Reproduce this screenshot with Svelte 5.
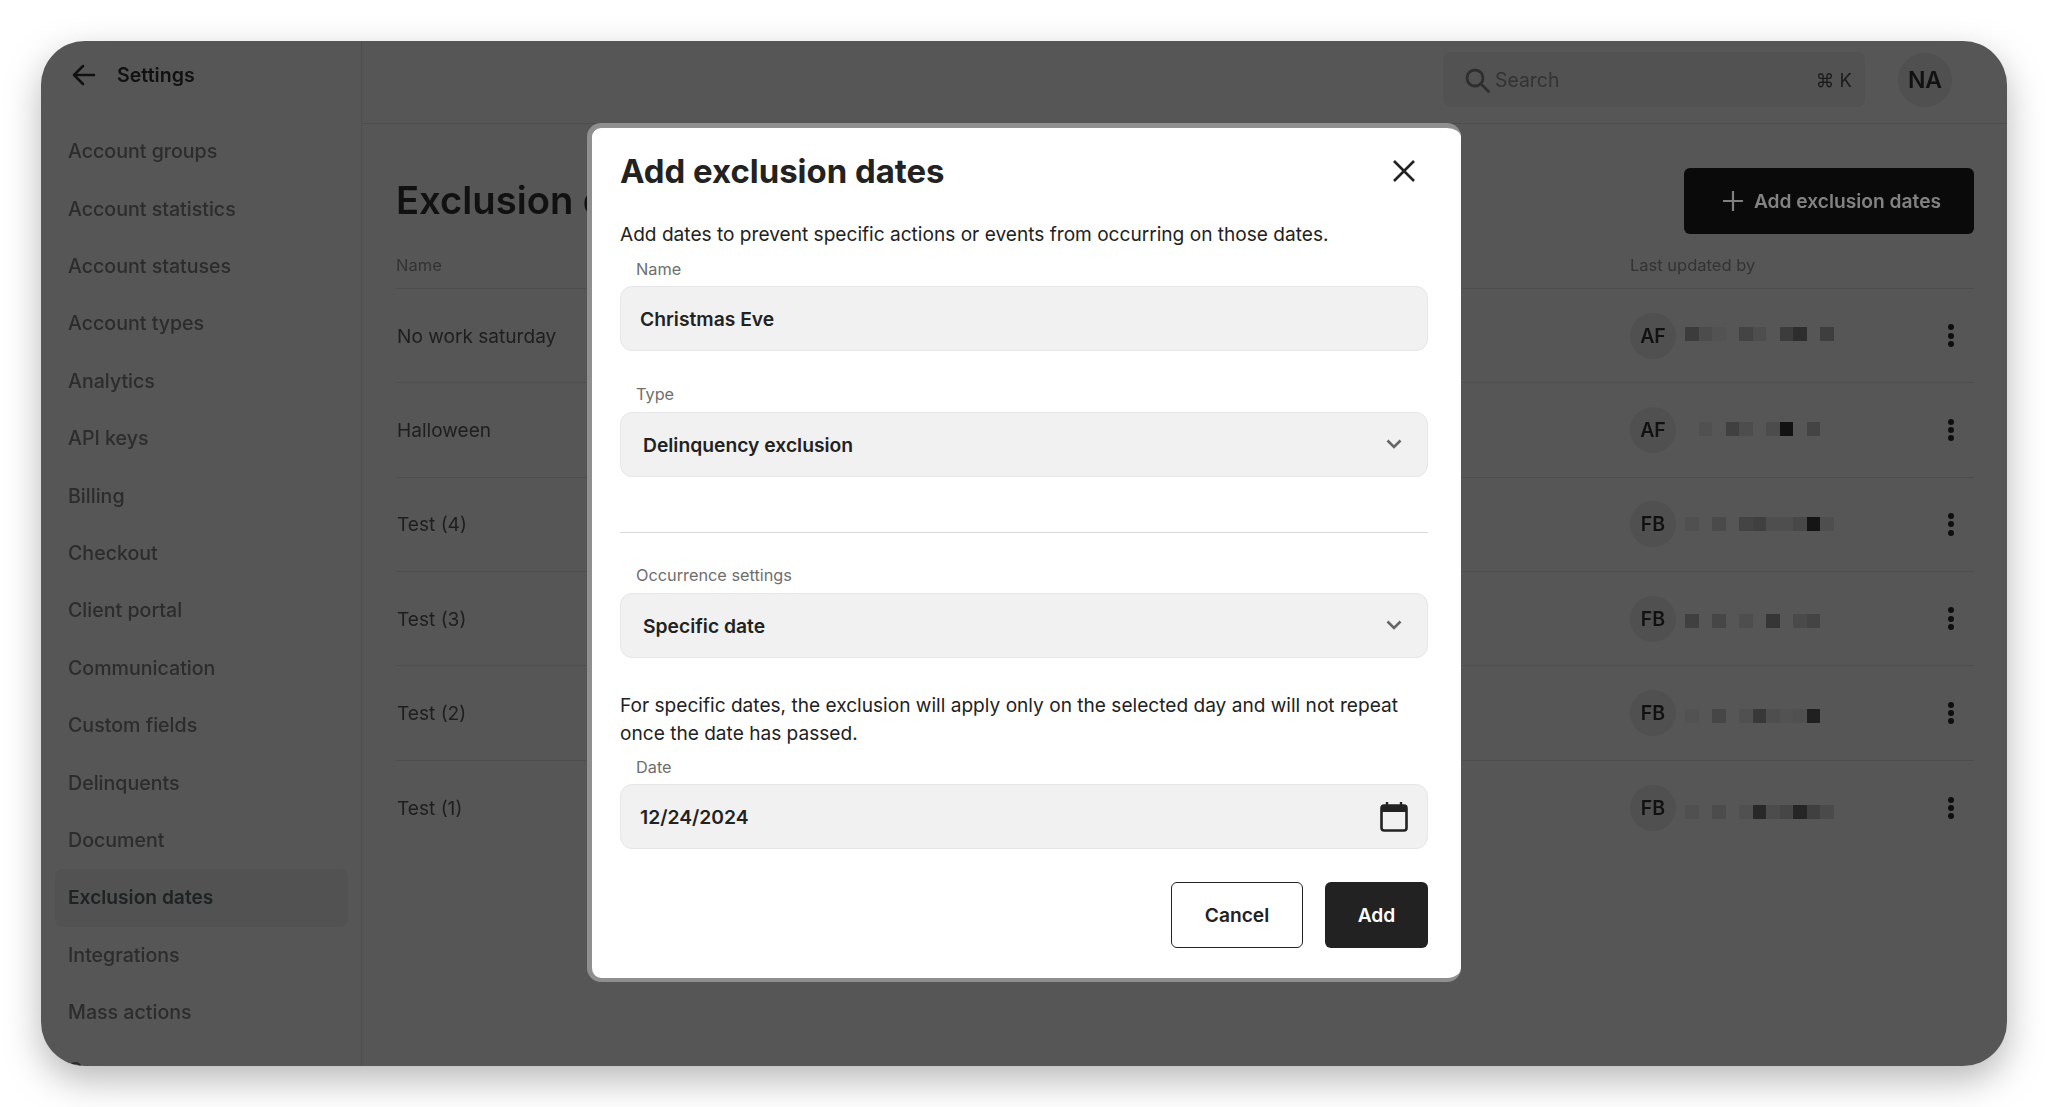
<script>
  const navItems = ['Account groups','Account statistics','Account statuses','Account types','Analytics','API keys','Billing','Checkout','Client portal','Communication','Custom fields','Delinquents','Document','Exclusion dates','Integrations','Mass actions','Occurrences'];
  const rows = [
    { name:'No work saturday', who:'AF', dy:-2, cells:[0x3c,0x4c,0x52,0,0x44,0x4e,0,0x3c,0x2e,0,0x3e] },
    { name:'Halloween', who:'AF', dy:-1, cells:[0,0x50,0,0x40,0x4d,0,0x4c,0x12,0,0x44,0] },
    { name:'Test (4)', who:'FB', dy:0, cells:[0x50,0,0x4a,0,0x44,0x40,0x4e,0x4e,0x48,0x15,0x4e] },
    { name:'Test (3)', who:'FB', dy:2, cells:[0x40,0,0x46,0,0x4e,0,0x36,0,0x4a,0x44,0] },
    { name:'Test (2)', who:'FB', dy:3, cells:[0x52,0,0x46,0,0x50,0x38,0x4e,0x52,0x50,0x20,0] },
    { name:'Test (1)', who:'FB', dy:4, cells:[0x50,0,0x4c,0,0x50,0x28,0x4c,0x46,0x26,0x40,0x4a] }
  ];
  const gray = (v) => v ? `rgb(${v},${v},${v})` : 'transparent';
</script>

<div class="page">
  <div class="window">
    <aside class="sidebar">
      <div class="back">
        <svg width="26" height="26" viewBox="0 0 26 26" fill="none" stroke="#111" stroke-width="2.5" stroke-linecap="round" stroke-linejoin="round"><path d="M23 13H3.5M12 4l-9 9 9 9"/></svg>
        <span>Settings</span>
      </div>
      <nav>
        {#each navItems as item}
          <div class="nav-item" class:active={item === 'Exclusion dates'}>{item}</div>
        {/each}
      </nav>
    </aside>

    <main class="main">
      <header class="topbar">
        <div class="search">
          <svg width="28" height="28" viewBox="0 0 28 28" fill="none" stroke="#2e2e2e" stroke-width="2.8" stroke-linecap="round"><circle cx="12" cy="12" r="8"/><path d="M18 18l7.5 7.5"/></svg>
          <span class="search-text">Search</span>
          <span class="kbd">⌘ K</span>
        </div>
        <div class="me">NA</div>
      </header>

      <section class="content">
        <div class="title-row">
          <h1>Exclusion dates</h1>
          <div class="add-btn">
            <svg width="22" height="22" viewBox="0 0 22 22" fill="none" stroke="#7f7f7f" stroke-width="2.2"><path d="M11 1v20M1 11h20"/></svg>
            <span>Add exclusion dates</span>
          </div>
        </div>

        <div class="thead">
          <span>Name</span>
          <span>Last updated by</span>
        </div>

        {#each rows as row}
          <div class="trow">
            <span class="rname">{row.name}</span>
            <div class="who">
              <span class="avatar">{row.who}</span>
              <span class="mosaic" style="margin-top:{row.dy * 2}px">
                {#each row.cells as c}
                  <i style="background:{gray(c)}"></i>
                {/each}
              </span>
            </div>
            <span class="kebab"><b></b><b></b><b></b></span>
          </div>
        {/each}
      </section>
    </main>

    <div class="scrim">
      <div class="modal">
        <div class="m-head">
          <h2>Add exclusion dates</h2>
          <svg width="24" height="24" viewBox="0 0 24 24" fill="none" stroke="#222" stroke-width="2.6"><path d="M2 2l20 20M22 2L2 22"/></svg>
        </div>
        <p class="desc">Add dates to prevent specific actions or events from occurring on those dates.</p>

        <div class="label">Name</div>
        <div class="field"><span>Christmas Eve</span></div>

        <div class="label l-type">Type</div>
        <div class="field select">
          <span>Delinquency exclusion</span>
          <svg width="16" height="11" viewBox="0 0 16 11" fill="none" stroke="#666" stroke-width="2.6"><path d="M1.5 1.5L8 8l6.5-6.5"/></svg>
        </div>

        <hr />

        <div class="label l-occ">Occurrence settings</div>
        <div class="field select">
          <span>Specific date</span>
          <svg width="16" height="11" viewBox="0 0 16 11" fill="none" stroke="#666" stroke-width="2.6"><path d="M1.5 1.5L8 8l6.5-6.5"/></svg>
        </div>

        <p class="note">For specific dates, the exclusion will apply only on the selected day and will not repeat once the date has passed.</p>

        <div class="label l-date">Date</div>
        <div class="field date">
          <span>12/24/2024</span>
          <svg width="28" height="30" viewBox="0 0 28 30"><path d="M7 0v5M21 0v5" stroke="#222" stroke-width="2.4"/><rect x="1.5" y="3.5" width="25" height="25" rx="2.5" fill="none" stroke="#222" stroke-width="2.6"/><rect x="1.5" y="3.5" width="25" height="6.5" fill="#222"/></svg>
        </div>

        <div class="actions">
          <div class="btn cancel">Cancel</div>
          <div class="btn add">Add</div>
        </div>
      </div>
    </div>
  </div>
</div>

<style>
  :global(body) { margin: 0; background: #fff; }
  .page {
    box-sizing: border-box;
    height: 100vh;
    padding: 41px;
    font-family: Inter, "Liberation Sans", sans-serif;
    overflow: hidden;
    filter: drop-shadow(0 14px 18px rgba(0,0,0,.28));
  }
  .window {
    position: relative;
    display: flex;
    height: 100%;
    background: #565656;
    border-radius: 44px;
    overflow: hidden;
  }
  .sidebar {
    box-sizing: border-box;
    width: 321px;
    flex: none;
    border-right: 1px solid #4e4e4e;
    overflow: hidden;
  }
  .back {
    display: flex;
    align-items: center;
    gap: 20px;
    padding: 21px 0 0 30px;
    height: 26px;
    font-size: 19.6px;
    font-weight: 600;
    color: #111;
  }
  nav { padding: 35.3px 13px 0 14px; }
  .nav-item {
    height: 57.4px;
    line-height: 57.4px;
    padding-left: 13px;
    font-size: 19.6px;
    font-weight: 500;
    color: #2c2c2c;
    border-radius: 8px;
    white-space: nowrap;
  }
  .nav-item.active { background: #525252; color: #1d2222; font-weight: 600; font-size: 19.2px; }
  .main { flex: 1; min-width: 0; }
  .topbar {
    box-sizing: border-box;
    height: 83px;
    display: flex;
    align-items: center;
    justify-content: flex-end;
    padding: 0 55px 5px 0;
    gap: 33px;
    border-bottom: 1px solid #4d4d4d;
  }
  .search {
    box-sizing: border-box;
    width: 422px;
    height: 55px;
    display: flex;
    align-items: center;
    padding: 0 13px 0 20px;
    gap: 4px;
    background: #525252;
    border-radius: 8px;
    font-size: 19.4px;
  }
  .search-text { flex: 1; color: #333; }
  .kbd { color: #1c1c1c; font-size: 18.5px; }
  .me {
    width: 54px;
    height: 54px;
    flex: none;
    border-radius: 50%;
    background: #505050;
    display: flex;
    align-items: center;
    justify-content: center;
    font-size: 23px;
    font-weight: 600;
    color: #111;
  }
  .content { padding: 44px 33px 0 34px; }
  .title-row {
    display: flex;
    align-items: center;
    justify-content: space-between;
    height: 66px;
  }
  h1 {
    margin: 0 0 2px;
    font-size: 38.2px;
    font-weight: 600;
    color: #111;
  }
  .add-btn {
    box-sizing: border-box;
    width: 290px;
    height: 66px;
    display: flex;
    align-items: center;
    justify-content: center;
    gap: 10px;
    padding-left: 5px;
    background: #0a0a0a;
    border-radius: 6px;
    color: #828282;
    font-size: 19.2px;
    font-weight: 600;
  }
  .thead {
    display: grid;
    grid-template-columns: 1fr 344px;
    height: 54px;
    line-height: 62px;
    font-size: 16.5px;
    color: #333;
    border-bottom: 1px solid #4e4e4e;
  }
  .trow {
    box-sizing: border-box;
    display: grid;
    grid-template-columns: 1fr 318px 26px;
    align-items: center;
    height: 94.33px;
    border-bottom: 1px solid #4e4e4e;
  }
  .trow:last-child { border-bottom: none; }
  .rname { font-size: 19.1px; color: #1e1e1e; padding-left: 1px; }
  .who { display: flex; align-items: center; gap: 9px; }
  .avatar {
    width: 46px;
    height: 46px;
    border-radius: 50%;
    background: #505050;
    display: flex;
    align-items: center;
    justify-content: center;
    font-size: 19.5px;
    font-weight: 600;
    color: #111;
  }
  .mosaic { display: flex; filter: blur(.4px); }
  .mosaic i { display: block; width: 13.5px; height: 14px; }
  .kebab { display: flex; flex-direction: column; gap: 2.2px; }
  .kebab b { display: block; width: 6px; height: 6px; border-radius: 50%; background: #0e0e0e; }

  .scrim {
    position: absolute;
    inset: 0;
    display: flex;
    align-items: center;
    justify-content: center;
    pointer-events: none;
  }
  .modal {
    box-sizing: border-box;
    width: 874px;
    height: 859px;
    padding: 0 33px 0 28px;
    background: #fff;
    border-style: solid;
    border-color: #8f8f8f;
    border-width: 5px 0 4px 5px;
    border-radius: 14px;
    color: #222;
    margin-top: -3px;
  }
  .m-head {
    display: flex;
    align-items: center;
    justify-content: space-between;
    height: 88px;
    padding: 0 12px 2px 0;
    box-sizing: border-box;
  }
  h2 {
    margin: 0;
    font-size: 32.9px;
    font-weight: 700;
    color: #222;
  }
  .desc, .note {
    margin: 0;
    font-size: 19.1px;
    line-height: 27.5px;
    color: #222;
  }
  .desc { padding-top: 5px; }
  .label {
    padding-left: 16px;
    font-size: 16.3px;
    line-height: 20px;
    color: #6e6e6e;
    margin-top: 11px;
    margin-bottom: 7px;
  }
  .l-type { margin-top: 33px; margin-bottom: 8px; }
  .l-occ { margin-top: 32px; margin-bottom: 8px; }
  .l-date { margin-top: 10px; margin-bottom: 7px; }
  .field {
    box-sizing: border-box;
    height: 65px;
    display: flex;
    align-items: center;
    justify-content: space-between;
    padding: 0 19px;
    background: #f1f1f1;
    border: 1.5px solid #e6e6e6;
    border-radius: 12px;
    font-size: 19.3px;
    font-weight: 600;
    color: #222;
  }
  .select { padding: 0 25px 0 22px; }
  .date { padding-right: 19px; }
  hr {
    border: none;
    border-top: 1.5px solid #d9d9d9;
    margin: 55px 0 0;
  }
  .note { margin-top: 34px; }
  .actions {
    display: flex;
    justify-content: flex-end;
    gap: 22px;
    margin-top: 33px;
  }
  .btn {
    box-sizing: border-box;
    height: 66px;
    display: flex;
    align-items: center;
    justify-content: center;
    border-radius: 6px;
    font-size: 19.2px;
    font-weight: 600;
  }
  .cancel { width: 132px; border: 1.5px solid #222; background: #fff; color: #222; }
  .add { width: 103px; background: #222; color: #fff; }
</style>
